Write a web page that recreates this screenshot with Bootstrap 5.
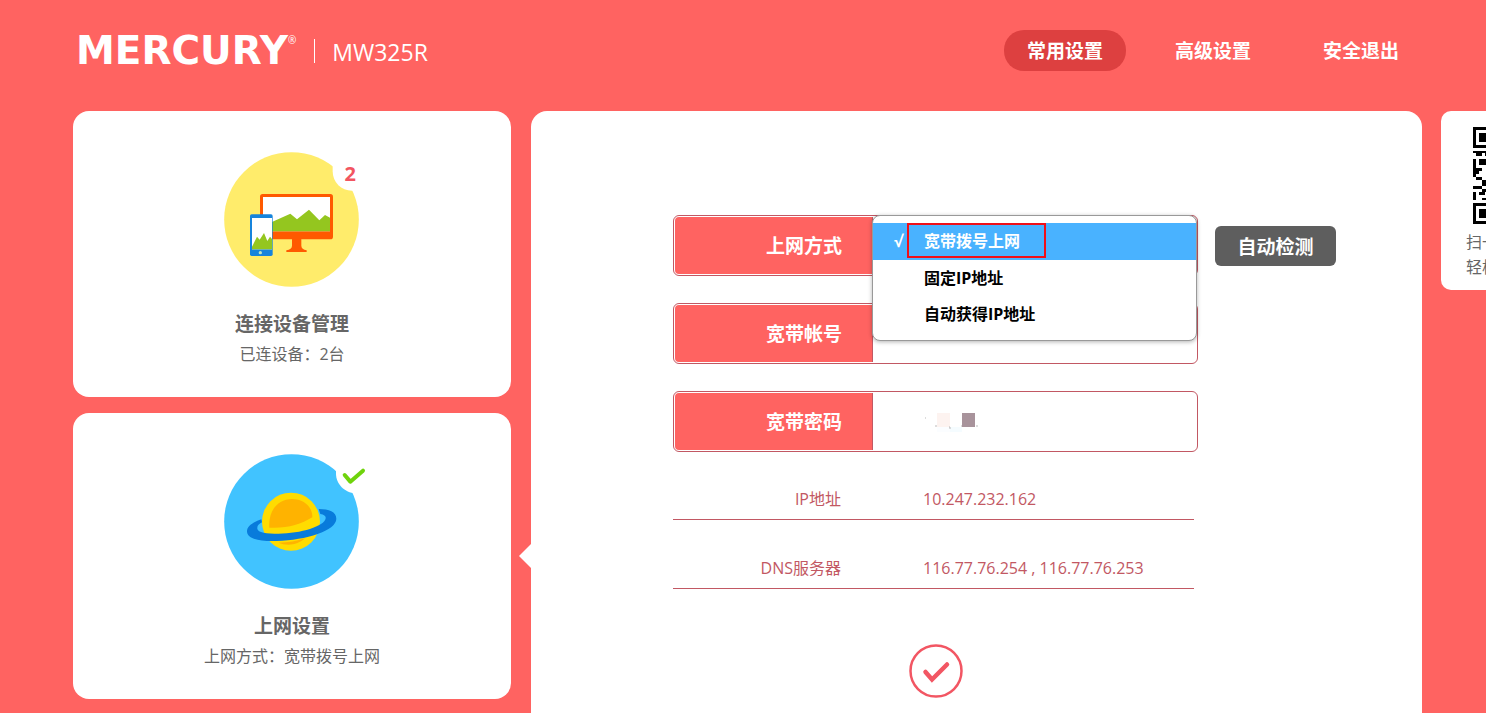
<!DOCTYPE html>
<html lang="zh-CN">
<head>
<meta charset="utf-8">
<meta name="viewport" content="width=device-width, initial-scale=1">
<title>MERCURY MW325R</title>
<link href="https://cdn.jsdelivr.net/npm/bootstrap@5.3.0/dist/css/bootstrap.min.css" rel="stylesheet">
<style>
  :root { --brand: #ff6361; --line: #c25863; --ink: #666; }
  body { background: var(--brand); color: var(--ink); font-family: "Open Sans", "Noto Sans CJK SC", sans-serif; font-size: 16px; line-height: 24px; overflow-x: hidden; }
  .topbar { height: 111px; padding: 0 64px 10px 76px; }
  .brand-name { font: 700 39px/40px "DejaVu Sans", sans-serif; }
  .brand-reg { font-size: 10px; line-height: 10px; }
  .brand-rule { width: 1px; height: 24px; background: #fff; margin: 0 17px 0 18px; }
  .model { font-size: 23px; line-height: 32px; padding-top: 2px; }
  .topnav { gap: 26px; }
  .topnav .nav-link { color: #fff; font-weight: 700; font-size: 19px; line-height: 25px; padding: 9px 23px 7px; border-radius: 20px; }
  .topnav .nav-link.active { background: #dd4040; }
  .board { padding-left: 73px; gap: 20px; }
  .side { flex: 0 0 438px; gap: 16px; }
  .tile { background: #fff; border: 0; border-radius: 16px; padding: 41px 16px 31px; color: var(--ink); }
  .tile.current::after { content: ""; position: absolute; right: -20px; top: 50%; margin-top: -12px; border: 12px solid transparent; border-left-width: 0; border-right-color: #fff; }
  .round-icon { width: 136px; height: 135px; }
  .round-icon svg { display: block; width: 135px; height: 135px; overflow: visible; }
  .count { position: absolute; right: 4px; top: 8px; color: #f25560; font-weight: 700; font-size: 20px; line-height: 28px; }
  .tile-title { font-size: 19px; line-height: 28px; font-weight: 700; margin: 23px 0 4px; }
  .panel { background: #fff; border-radius: 16px 16px 0 0; padding: 104px 16px 13px 142px; min-width: 0; }
  .field { width: 525px; height: 61px; border: 1px solid var(--line); border-radius: 6px; padding: 1px; }
  .field-label { width: 198px; padding-right: 30px; background: var(--brand); color: #fff; font-size: 19px; font-weight: 700; border-radius: 4px 0 0 4px; border-right: 1px solid var(--line); }
  .field .form-control, .field .form-select { border: 0; background: none; box-shadow: none; padding: 0 51px; flex: 1; min-width: 0; color: #333; }
  .fields { gap: 27px; }
  .detect { background: #5e5e5e; color: #fff; font-size: 19px; font-weight: 700; line-height: 28px; padding: 7px 0 5px; border: 0; border-radius: 6px; width: 121px; margin-left: 17px; white-space: nowrap; }
  .choices { position: absolute; z-index: 5; top: 0; left: 199px; width: 325px; background: #fff; border: 1px solid #999; border-radius: 8px; padding: 7px 0 8px; box-shadow: 0 1px 4px rgba(0,0,0,.3); }
  .choice { display: block; width: 100%; border: 0; background: none; text-align: left; padding: 0 51px; font-weight: 700; line-height: 36px; color: #000; }
  .choice.chosen { position: relative; background: #49b2ff; color: #fff; padding-bottom: 1px; }
  .choice.chosen::before { content: "√"; position: absolute; left: 21px; }
  .choice .outline { position: absolute; left: 34px; top: 0; width: 139px; height: 35px; border: 2px solid #f00f18; }
  .facts { width: 521px; color: var(--line); margin: 35px 0 0; }
  .fact { height: 69px; padding-bottom: 8px; border-bottom: 1px solid var(--line); }
  .fact:first-child { height: 33px; }
  .fact dt { width: 168px; text-align: right; font-weight: 400; }
  .fact dd { margin: 0 0 0 82px; }
  .mosaic { position: absolute; left: 251px; top: 13px; width: 54px; height: 27px; }
  .save { width: 54px; height: 54px; padding: 0; border: 0; background: none; margin: 55px 0 0 236px; }
  .save svg { display: block; width: 54px; height: 54px; }
  .scan { flex: 0 0 161px; margin-right: -117px; margin-left: -1px; background: #fff; border-radius: 10px; padding: 16px 25px 10px; line-height: 25px; white-space: nowrap; }
  .scan svg { display: block; width: 97px; height: 97px; margin: 0 7px 6px; }
</style>
</head>
<body>
<div class="d-flex flex-column min-vh-100 overflow-hidden">
  <header class="topbar d-flex align-items-center justify-content-between text-white">
    <div class="d-flex align-items-center">
      <span class="brand-name">MERCURY</span><span class="brand-reg align-self-start mt-1">®</span>
      <span class="brand-rule"></span>
      <span class="model">MW325R</span>
    </div>
    <nav class="nav topnav">
      <a class="nav-link active" href="#">常用设置</a>
      <a class="nav-link" href="#">高级设置</a>
      <a class="nav-link" href="#">安全退出</a>
    </nav>
  </header>

  <main class="board d-flex flex-grow-1">
    <aside class="side d-flex flex-column">
      <a class="tile card align-items-center text-decoration-none" href="#">
        <div class="round-icon position-relative">
          <svg viewBox="72 36 405 405" aria-hidden="true">
            <circle cx="274.500" cy="238.500" r="202" fill="#ffec6b"/>
            <path d="M398 30h100v122h-42c-32 0-58-24-58-58z" fill="#fff"/>
            <rect x="180" y="162" width="219" height="136" rx="8" fill="#ff5a00"/>
            <path d="M189 171h201v103H189z" fill="#fff"/>
            <path d="M189 258l82-37 20 17 36-29 31 32 17-16 15 8v41H189z" fill="#94c61f"/>
            <path d="M276 297h28v20c0 8 6 11 16 14v5h-61v-5c11-3 17-6 17-14z" fill="#ff5a00"/>
            <rect x="150" y="223" width="68" height="125" rx="5" fill="#1684dc"/>
            <path d="M156 234h60v94h-60z" fill="#fff"/>
            <path d="M156 320l15-30 8 9 13-20 10 24 8-13 6 7v31h-60z" fill="#94c61f"/>
            <circle cx="181" cy="338" r="5" fill="#b9e4c8"/>
          </svg>
          <span class="count">2</span>
        </div>
        <h2 class="tile-title">连接设备管理</h2>
        <span>已连设备：2台</span>
      </a>
      <a class="tile card current align-items-center text-decoration-none" href="#">
        <div class="round-icon position-relative">
          <svg viewBox="72 41 405 405" aria-hidden="true">
            <circle cx="274.500" cy="243.500" r="202" fill="#41c3ff"/>
            <path d="M408 36h100v122h-42c-32 0-58-28-58-58z" fill="#fff"/>
            <path d="M434 104l17 20 38-33" fill="none" stroke="#6fd30c" stroke-width="12" stroke-linecap="round" stroke-linejoin="round"/>
            <circle cx="273" cy="244" r="87" fill="#ffdc00"/>
            <path d="M208 262c-4-50 25-86 68-86 36 0 62 24 61 55-36 22-78 34-129 31z" fill="#ffb300"/>
            <path d="M235 307c30 0 56-5 80-13-20 20-54 24-80 13z" fill="#ffb300"/>
            <path d="M184 237c-28 10-43 21-43 36 0 23 38 31 89 29 89-3 179-31 179-67 0-21-22-29-53-29l5 15c12 2 17 7 16 13-3 24-75 46-141 46-36 0-63-3-64-15-1-9 4-14 14-19z" fill="#087bdb"/>
          </svg>
        </div>
        <h2 class="tile-title">上网设置</h2>
        <span>上网方式：宽带拨号上网</span>
      </a>
    </aside>

    <section class="panel flex-grow-1">
      <form>
        <div class="fields d-flex flex-column">
          <div class="d-flex align-items-center position-relative">
            <div class="field d-flex flex-shrink-0">
              <label class="field-label d-flex align-items-center justify-content-end" for="mode">上网方式</label>
              <select class="form-select" id="mode"><option>宽带拨号上网</option><option>固定IP地址</option><option>自动获得IP地址</option></select>
            </div>
            <button class="detect" type="button">自动检测</button>
            <div class="choices">
              <button class="choice chosen" type="button">宽带拨号上网<span class="outline"></span></button>
              <button class="choice" type="button">固定IP地址</button>
              <button class="choice" type="button">自动获得IP地址</button>
            </div>
          </div>
          <div class="field d-flex">
            <label class="field-label d-flex align-items-center justify-content-end" for="account">宽带帐号</label>
            <input class="form-control" id="account" type="text">
          </div>
          <div class="field d-flex position-relative">
            <label class="field-label d-flex align-items-center justify-content-end" for="secret">宽带密码</label>
            <input class="form-control" id="secret" type="password">
            <svg class="mosaic" viewBox="0 0 54 27" aria-hidden="true">
              <path d="M12 8h13v14H12z" fill="#fdf3f0"/><path d="M12 22h13v5H12z" fill="#fbfdff"/>
              <path d="M25 22h12v5H25z" fill="#f5fcff"/><path d="M37 8h13v14H37z" fill="#a8939b"/>
              <path d="M0 13h1M10 21h2M24 22h1v2M36 21h1M51 21h2" stroke="#bbb" fill="none"/>
            </svg>
          </div>
        </div>
        <dl class="facts">
          <div class="fact d-flex align-items-end"><dt>IP地址</dt><dd>10.247.232.162</dd></div>
          <div class="fact d-flex align-items-end"><dt>DNS服务器</dt><dd>116.77.76.254 , 116.77.76.253</dd></div>
        </dl>
        <button class="save" type="submit" aria-label="保存">
          <svg viewBox="0 0 54 54" fill="none" stroke="#f25663"><circle cx="27" cy="27" r="25.500" stroke-width="2.500"/><path d="M16.500 28l6.500 7.500L38 20.500" stroke-width="4.500" stroke-linecap="round"/></svg>
        </button>
      </form>
    </section>

    <aside class="scan align-self-start">
      <svg viewBox="0 0 33 33" shape-rendering="crispEdges" aria-hidden="true">
        <g fill="none" stroke="#000"><path d="M.5.5h6v6h-6zM26.500.5h6v6h-6zM.5 26.500h6v6h-6z"/></g>
        <path d="M2 2h3v3H2zM28 2h3v3h-3zM2 28h3v3H2zM0 8h5v1H0zM1 9h2v1H1zM4 9h2v1H4zM0 11h1v3H0zM2 11h3v2H2zM0 14h3v1H0zM0 15h2v1H0zM0 16h1v1H0zM1 17h2v1H1zM3 18h2v2H3zM0 20h1v1H0zM1 20h2v1H1zM3 21h3v1H3zM0 22h1v3H0zM2 22h2v1H2zM3 24h2v1H3z"/>
        <path d="M9 1h14M8 4h5m3 0h7M10 7h12M8 10h4m2 0h9m3 0h6M9 13h7m4 0h10M7 16h9m3 0h12M9 19h4m2 0h11M8 22h11m3 0h8M9 25h15M10 28h4m3 0h11M9 31h9m4 0h9" stroke="#000" stroke-dasharray="2 1"/>
      </svg>
      <div>扫一扫下载APP</div>
      <div>轻松管理路由器</div>
    </aside>
  </main>
</div>
<script src="https://cdn.jsdelivr.net/npm/bootstrap@5.3.0/dist/js/bootstrap.bundle.min.js"></script>
</body>
</html>
